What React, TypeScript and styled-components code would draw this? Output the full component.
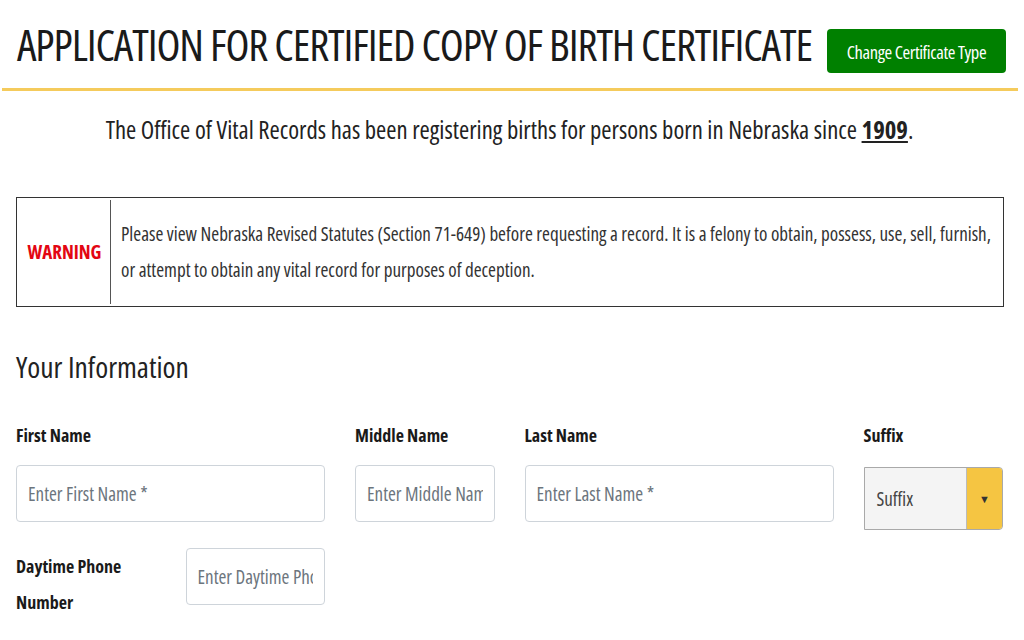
import React from 'react';
import styled, { createGlobalStyle } from 'styled-components';

const GlobalStyle = createGlobalStyle`
  body {
    margin: 0;
    background: #fff;
    font-family: "Open Sans", "Liberation Sans", sans-serif;
    font-stretch: 75%;
    color: #212529;
  }
  * { box-sizing: border-box; }
`;

const Page = styled.div`
  width: 1018px;
  padding-left: 1px;
`;

const Header = styled.header`
  display: flex;
  align-items: center;
  justify-content: space-between;
  height: 91px;
  margin-left: 1px;
  padding: 0 12px 0 15px;
  border-bottom: 3px solid #f5cb5c;
`;

const Title = styled.h1`
  margin: 0;
  font-size: 44px;
  font-weight: 400;
  line-height: 1;
  white-space: nowrap;
  color: #1a1a1a;
  letter-spacing: -1.1px;
`;

const GreenButton = styled.button`
  height: 44px;
  width: 179px;
  margin-top: 14px;
  padding: 0;
  border: none;
  border-radius: 4px;
  background: #008000;
  color: #fff;
  font-family: inherit;
  font-stretch: 75%;
  font-size: 18.5px;
  letter-spacing: -0.4px;
  white-space: nowrap;
`;

const Intro = styled.p`
  margin: 22px 0 0;
  text-align: center;
  font-size: 24.7px;
  color: #222;

  strong {
    font-weight: 700;
    text-decoration: underline;
  }
`;

const WarningBox = styled.div`
  display: grid;
  grid-template-columns: 92px 1fr;
  margin: 51px 14px 0 15px;
  padding: 2px;
  border: 1px solid #333;
`;

const WarningLabel = styled.div`
  display: flex;
  align-items: center;
  justify-content: center;
  border-right: 1px solid #555;
  color: #e30613;
  font-weight: 700;
  font-size: 19px;
`;

const WarningText = styled.p`
  margin: 0;
  padding: 16px 8px 16px 10px;
  font-size: 19.1px;
  line-height: 36px;
  color: #333;
`;

const SectionTitle = styled.h2`
  margin: 41px 0 0 15px;
  font-size: 29.5px;
  font-weight: 400;
  line-height: 1.3;
  color: #222;
`;

const Row = styled.div<{ $top: number }>`
  display: grid;
  grid-template-columns: repeat(12, 1fr);
  margin-top: ${p => p.$top}px;
`;

const Col = styled.div<{ $span: number }>`
  grid-column: span ${p => p.$span};
  padding: 0 15px;
`;

const Label = styled.label`
  display: block;
  font-weight: 700;
  font-size: 18px;
  line-height: 36px;
  color: #1a1a1a;
  margin-bottom: 12px;
`;

const Input = styled.input`
  display: block;
  width: 100%;
  height: 57px;
  padding: 0 11px;
  border: 1px solid #ced4da;
  border-radius: 4px;
  font-family: inherit;
  font-stretch: 75%;
  font-size: 19px;
  color: #495057;
  background: #fff;

  &::placeholder {
    color: #6c757d;
  }
`;

const SelectBox = styled.div`
  display: flex;
  height: 63px;
  margin-top: 14px;
  border: 1px solid #a9a9a9;
  border-radius: 0 4px 4px 0;
  background: #f4f4f4;
  overflow: hidden;
`;

const SelectValue = styled.span`
  flex: 1;
  display: flex;
  align-items: center;
  padding-left: 12px;
  font-size: 19px;
  color: #444;
`;

const SelectArrow = styled.span`
  width: 36px;
  display: flex;
  align-items: center;
  justify-content: center;
  background: #f5c542;
  border-left: 1px solid #bbb;
  font-size: 11px;
  color: #333;
`;

export default function App() {
  return (
    <Page>
      <GlobalStyle />
      <Header>
        <Title>APPLICATION FOR CERTIFIED COPY OF BIRTH CERTIFICATE</Title>
        <GreenButton>Change Certificate Type</GreenButton>
      </Header>

      <Intro>
        The Office of Vital Records has been registering births for persons born in Nebraska since <strong>1909</strong>.
      </Intro>

      <WarningBox>
        <WarningLabel>WARNING</WarningLabel>
        <WarningText>
          Please view Nebraska Revised Statutes (Section 71-649) before requesting a record. It is a felony to obtain, possess, use, sell, furnish, or attempt to obtain any vital record for purposes of deception.
        </WarningText>
      </WarningBox>

      <SectionTitle>Your Information</SectionTitle>

      <Row $top={31}>
        <Col $span={4}>
          <Label>First Name</Label>
          <Input placeholder="Enter First Name *" />
        </Col>
        <Col $span={2}>
          <Label>Middle Name</Label>
          <Input placeholder="Enter Middle Name" />
        </Col>
        <Col $span={4}>
          <Label>Last Name</Label>
          <Input placeholder="Enter Last Name *" />
        </Col>
        <Col $span={2}>
          <Label>Suffix</Label>
          <SelectBox>
            <SelectValue>Suffix</SelectValue>
            <SelectArrow>▼</SelectArrow>
          </SelectBox>
        </Col>
      </Row>

      <Row $top={18}>
        <Col $span={2}>
          <Label>Daytime Phone Number</Label>
        </Col>
        <Col $span={2}>
          <Input placeholder="Enter Daytime Phone Number" />
        </Col>
      </Row>
    </Page>
  );
}
